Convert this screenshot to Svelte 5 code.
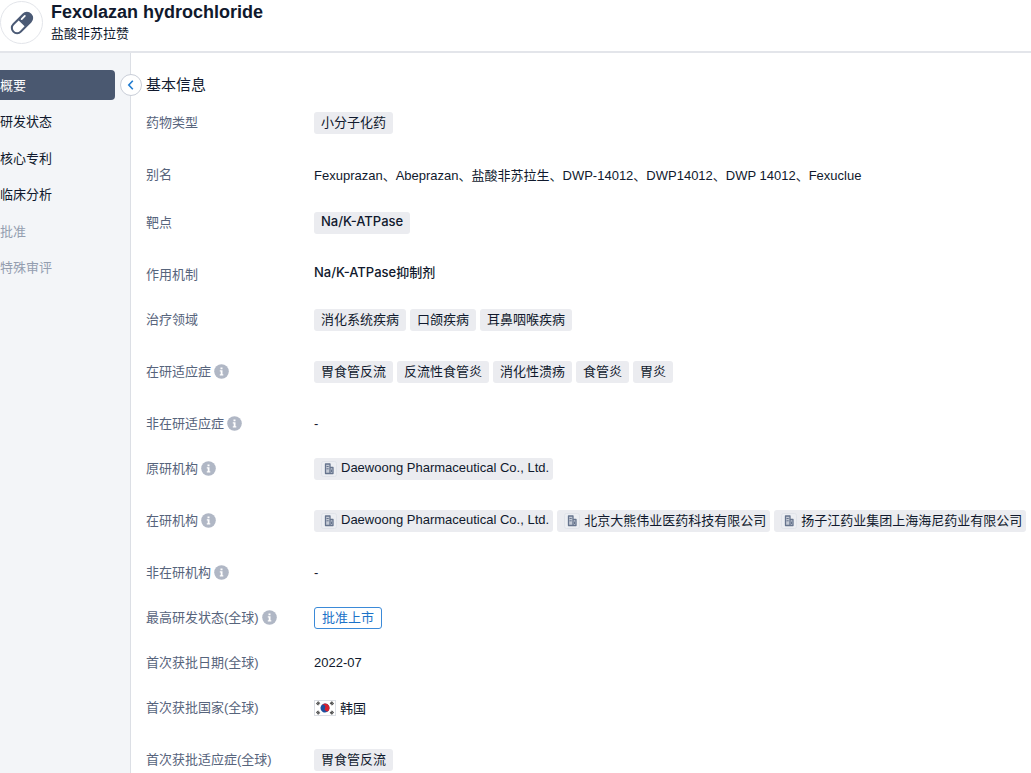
<script lang="ts">
    let title = "Fexolazan hydrochloride"
    let subtitle = "盐酸非苏拉赞"
    let current = $state("概要")

    const sections = [
        { name: "概要" },
        { name: "研发状态" },
        { name: "核心专利" },
        { name: "临床分析" },
        { name: "批准", disabled: true },
        { name: "特殊审评", disabled: true },
    ]

    type Row = {
        label: string
        kind: "tag" | "text" | "org" | "status" | "country"
        values: string[]
        size: "short" | "mid" | "tall"
        info?: boolean
        inter?: boolean
        top?: boolean
    }

    const rows: Row[] = [
        { label: "药物类型", kind: "tag", values: ["小分子化药"], size: "tall" },
        { label: "别名", kind: "text", values: ["Fexuprazan、Abeprazan、盐酸非苏拉生、DWP-14012、DWP14012、DWP 14012、Fexuclue"], size: "mid" },
        { label: "靶点", kind: "tag", values: ["Na/K-ATPase"], size: "tall", inter: true },
        { label: "作用机制", kind: "text", values: ["Na/K-ATPase抑制剂"], size: "short", inter: true, top: true },
        { label: "治疗领域", kind: "tag", values: ["消化系统疾病", "口颌疾病", "耳鼻咽喉疾病"], size: "tall" },
        { label: "在研适应症", kind: "tag", values: ["胃食管反流", "反流性食管炎", "消化性溃疡", "食管炎", "胃炎"], size: "tall", info: true },
        { label: "非在研适应症", kind: "text", values: ["-"], size: "short", info: true },
        { label: "原研机构", kind: "org", values: ["Daewoong Pharmaceutical Co., Ltd."], size: "tall", info: true },
        { label: "在研机构", kind: "org", values: ["Daewoong Pharmaceutical Co., Ltd.", "北京大熊伟业医药科技有限公司", "扬子江药业集团上海海尼药业有限公司"], size: "tall", info: true },
        { label: "非在研机构", kind: "text", values: ["-"], size: "short", info: true },
        { label: "最高研发状态(全球)", kind: "status", values: ["批准上市"], size: "short", info: true },
        { label: "首次获批日期(全球)", kind: "text", values: ["2022-07"], size: "short" },
        { label: "首次获批国家(全球)", kind: "country", values: ["韩国"], size: "tall" },
        { label: "首次获批适应症(全球)", kind: "tag", values: ["胃食管反流"], size: "short" },
    ]
</script>

<div class="page">
    <header>
        <div class="logo">
            <svg width="28" height="28" viewBox="0 0 28 28">
                <g transform="rotate(-45 14 14)">
                    <rect x="0.800" y="7.700" width="26.400" height="12.600" rx="6.300" fill="#4b5a75" />
                    <path d="M13.500 9.800H7a4.200 4.200 0 0 0 0 8.400h6.500z" fill="#fff" />
                    <path d="M16.500 11h4.500" fill="none" stroke="#fff" stroke-width="1.800" stroke-linecap="round" />
                </g>
            </svg>
        </div>
        <div>
            <h1>{title}</h1>
            <p>{subtitle}</p>
        </div>
    </header>

    <div class="body">
        <aside>
            <nav>
                {#each sections as section}
                    <button
                        class="nav-item"
                        class:active={current === section.name}
                        disabled={section.disabled}
                        onclick={() => (current = section.name)}>{section.name}</button>
                {/each}
            </nav>
            <button class="collapse" aria-label="收起">
                <svg width="12" height="12" viewBox="0 0 12 12">
                    <path d="M7.800 1.800L3.800 6l4 4.200" fill="none" stroke="#1f7bd0" stroke-width="1.600" />
                </svg>
            </button>
        </aside>

        <main>
            <h2>基本信息</h2>
            <dl>
                {#each rows as row}
                    <div class="row {row.size}">
                        <dt>
                            <span>{row.label}</span>
                            {#if row.info}
                                <svg width="15" height="15" viewBox="0 0 15 15">
                                    <circle cx="7.500" cy="7.500" r="7.300" fill="#b0b7c5" />
                                    <path d="M6.500 3.500h2v1.700h-2zM5.800 6.300h2.700v4h.8v1.200H5.800v-1.200h.9V7.500h-.9z" fill="#fff" />
                                </svg>
                            {/if}
                        </dt>
                        <dd class:inter={row.inter} class:top={row.top}>
                            {#each row.values as value}
                                {#if row.kind === "text"}
                                    <span class="text">{value}</span>
                                {:else if row.kind === "status"}
                                    <span class="status">{value}</span>
                                {:else if row.kind === "country"}
                                    <span class="country">
                                        <svg width="22" height="16" viewBox="0 0 22 16">
                                            <rect x="0.500" y="0.500" width="21" height="15" fill="#fff" stroke="#dcdfe5" />
                                            <g transform="rotate(30 11 8)">
                                                <circle cx="11" cy="8" r="4.500" fill="#1e50a0" />
                                                <path d="M6.500 8a4.500 4.500 0 0 1 9 0a2.250 2.250 0 0 1-4.500 0a2.250 2.250 0 0 0-4.500 0z" fill="#d8202f" />
                                            </g>
                                            <g stroke="#333" stroke-width="3" stroke-dasharray="0.900 0.300">
                                                <path d="M3 4.600L5.200 2.200M16.800 13.800L19 11.400M16.800 2.200L19 4.600M3 11.400L5.200 13.800" />
                                            </g>
                                        </svg>
                                        <span>{value}</span>
                                    </span>
                                {:else}
                                    <span class="tag" class:with-icon={row.kind === "org"}>
                                        {#if row.kind === "org"}
                                            <svg width="16" height="16" viewBox="0 0 16 16">
                                                <rect x="0.500" y="0.500" width="15" height="15" rx="2" fill="#eceef2" stroke="#e0e3e9" />
                                                <path d="M4.500 12.500v-9.500h4.500v9.500zM9 6.500h3v6H9z" fill="#c5cbd6" stroke="#66748d" stroke-width="1.300" stroke-linejoin="round" />
                                                <path d="M5.500 5.500h2.200M5.500 7.800h2.200M10.500 8.500v2.500" fill="none" stroke="#66748d" />
                                            </svg>
                                        {/if}
                                        <span>{value}</span>
                                    </span>
                                {/if}
                            {/each}
                        </dd>
                    </div>
                {/each}
            </dl>
        </main>
    </div>
</div>

<style>
    :global(body) {
        background: #fff;
        overflow-x: hidden;
    }
    .page {
        display: flex;
        flex-direction: column;
        min-height: 100vh;
        font-family: "Liberation Sans", "Noto Sans CJK SC", sans-serif;
        font-size: 13px;
        color: #10192d;
    }
    header {
        display: flex;
        gap: 8px;
        height: 51px;
        border-bottom: 2px solid #e3e5ea;
    }
    .logo {
        display: flex;
        align-items: center;
        justify-content: center;
        box-sizing: border-box;
        width: 43px;
        height: 43px;
        margin-top: 1px;
        border: 1px solid #e3e5ea;
        border-radius: 50%;
    }
    h1 {
        margin: 0;
        font-size: 18px;
        line-height: 24px;
    }
    header p {
        margin: 0;
        line-height: 20px;
    }
    .body {
        display: flex;
        flex: 1;
    }
    aside {
        position: relative;
        flex: none;
        box-sizing: border-box;
        width: 131px;
        padding: 17px 15px 0 0;
        background: #f3f5f8;
        border-right: 1px solid #dcdfe5;
    }
    nav {
        display: flex;
        flex-direction: column;
        justify-content: space-between;
        height: 213px;
    }
    button {
        padding: 0;
        border: none;
        background: none;
        font: inherit;
        color: inherit;
        cursor: pointer;
    }
    .nav-item {
        height: 30px;
        padding-bottom: 2px;
        border-radius: 0 4px 4px 0;
        text-align: left;
    }
    .nav-item:disabled {
        color: #949eb0;
        cursor: default;
    }
    .nav-item.active {
        background: #4a5870;
        color: #fff;
    }
    .collapse {
        position: absolute;
        top: 21px;
        right: -12px;
        display: flex;
        align-items: center;
        justify-content: center;
        width: 22px;
        height: 22px;
        border: 1px solid #c9ced8;
        border-radius: 50%;
        background: #fff;
    }
    main {
        flex: 1;
        min-width: 0;
        padding: 20px 0 0 15px;
    }
    h2 {
        margin: 0 0 14px;
        font-size: 15px;
        font-weight: 400;
        line-height: 24px;
    }
    dl {
        margin: 0;
    }
    .row {
        display: flex;
    }
    .short {
        min-height: 45px;
    }
    .mid {
        min-height: 48px;
    }
    .tall {
        min-height: 52px;
    }
    dt {
        display: flex;
        align-items: center;
        flex: none;
        gap: 3px;
        box-sizing: border-box;
        width: 168px;
        height: 24px;
        padding-bottom: 2px;
        color: #57647c;
    }
    dt span,
    .text,
    .country span {
        padding-bottom: 2px;
    }
    dd {
        display: flex;
        align-items: center;
        gap: 4px;
        height: 24px;
        margin: 0;
        white-space: nowrap;
    }
    .inter {
        font-family: Inter, "Noto Sans CJK SC", sans-serif;
        font-weight: 500;
    }
    .top {
        height: 18px;
    }
    .tag {
        display: flex;
        align-items: center;
        height: 22px;
        padding: 0 7px;
        border-radius: 3px;
        background: #ebecf0;
    }
    .tag span {
        padding-bottom: 4px;
    }
    .with-icon {
        gap: 4px;
        padding-right: 4px;
    }
    .status {
        padding: 0 7px;
        border: 1px solid #3b8ad8;
        border-radius: 3px;
        line-height: 20px;
        color: #1b72c8;
    }
    .country {
        display: flex;
        align-items: center;
        gap: 4px;
    }
</style>
